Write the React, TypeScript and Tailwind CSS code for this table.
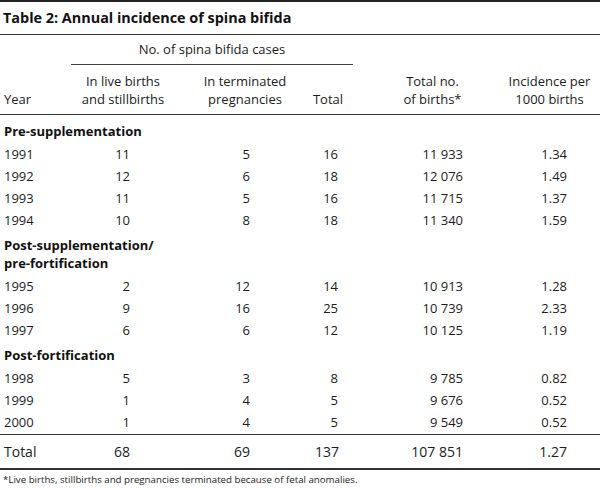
const font = { fontFamily: '"Open Sans", "Liberation Sans", sans-serif' }

type Row = { year: string; live: string; term: string; total: string; births: string; rate: string }

const sections: { title: string[]; rows: Row[] }[] = [
  {
    title: ['Pre-supplementation'],
    rows: [
      { year: '1991', live: '11', term: '5', total: '16', births: '11 933', rate: '1.34' },
      { year: '1992', live: '12', term: '6', total: '18', births: '12 076', rate: '1.49' },
      { year: '1993', live: '11', term: '5', total: '16', births: '11 715', rate: '1.37' },
      { year: '1994', live: '10', term: '8', total: '18', births: '11 340', rate: '1.59' },
    ],
  },
  {
    title: ['Post-supplementation/', 'pre-fortification'],
    rows: [
      { year: '1995', live: '2', term: '12', total: '14', births: '10 913', rate: '1.28' },
      { year: '1996', live: '9', term: '16', total: '25', births: '10 739', rate: '2.33' },
      { year: '1997', live: '6', term: '6', total: '12', births: '10 125', rate: '1.19' },
    ],
  },
  {
    title: ['Post-fortification'],
    rows: [
      { year: '1998', live: '5', term: '3', total: '8', births: '9 785', rate: '0.82' },
      { year: '1999', live: '1', term: '4', total: '5', births: '9 676', rate: '0.52' },
      { year: '2000', live: '1', term: '4', total: '5', births: '9 549', rate: '0.52' },
    ],
  },
]

const grid = 'grid grid-cols-[71px_104px_140px_38px_159px_88px]'

function DataRow({ r, className }: { r: Row; className: string }) {
  return (
    <div className={`${grid} ${className}`}>
      <div className="pl-[4px]">{r.year}</div>
      <div className="pr-[45px] text-right">{r.live}</div>
      <div className="pr-[65px] text-right">{r.term}</div>
      <div className="pr-[15px] text-right">{r.total}</div>
      <div className="pr-[49px] text-right">{r.births}</div>
      <div className="pr-[33px] text-right">{r.rate}</div>
    </div>
  )
}

function Head({ children, className = '' }: { children: React.ReactNode; className?: string }) {
  return (
    <div className={`flex flex-col items-center justify-end whitespace-nowrap ${className}`}>{children}</div>
  )
}

export default function App() {
  return (
    <div className="w-[600px] h-[488px] bg-white text-[#1c1c1c] text-[13px] overflow-hidden" style={font}>
      <div className="border-t-2 border-[#222]" />
      <div className="h-[32px] flex items-center pl-[3px] text-[14.4px] font-bold text-[#111]">
        Table 2: Annual incidence of spina bifida
      </div>
      <div className="border-t border-[#333]" />

      <div className={`${grid} h-[30px]`}>
        <div />
        <div className="col-span-3 flex flex-col justify-between">
          <div className="flex-1 flex items-center justify-center pt-[1px]">No. of spina bifida cases</div>
          <div className="border-t border-[#444]" />
        </div>
      </div>

      <div className={`${grid} h-[49px] items-center leading-[18px]`}>
        <div className="pl-[4px] self-center pt-[18px]">Year</div>
        <Head>
          <span>In live births</span>
          <span>and stillbirths</span>
        </Head>
        <Head>
          <span>In terminated</span>
          <span>pregnancies</span>
        </Head>
        <Head className="pr-[12px] pt-[18px]">
          <span>Total</span>
        </Head>
        <Head>
          <span>Total no.</span>
          <span>of births*</span>
        </Head>
        <Head className="pr-[13px]">
          <span>Incidence per</span>
          <span>1000 births</span>
        </Head>
      </div>
      <div className="border-t border-[#333]" />

      <div className="pt-[3px]">
        {sections.map((s) => (
          <div key={s.title[0]}>
            <div className="py-[4px] pl-[4px] leading-[18px] font-bold text-[#111]">
              {s.title.map((t) => (
                <div key={t}>{t}</div>
              ))}
            </div>
            {s.rows.map((r) => (
              <DataRow key={r.year} r={r} className="h-[22px] items-center" />
            ))}
          </div>
        ))}
      </div>

      <div className="border-t border-[#333]" />
      <DataRow
        r={{ year: 'Total', live: '68', term: '69', total: '137', births: '107 851', rate: '1.27' }}
        className="h-[33px] items-center text-[14px]"
      />
      <div className="border-t-2 border-[#333]" />
      <div className="pl-[3px] leading-[18px] pt-[1px] text-[9.7px] text-[#222]">
        *Live births, stillbirths and pregnancies terminated because of fetal anomalies.
      </div>
    </div>
  )
}
